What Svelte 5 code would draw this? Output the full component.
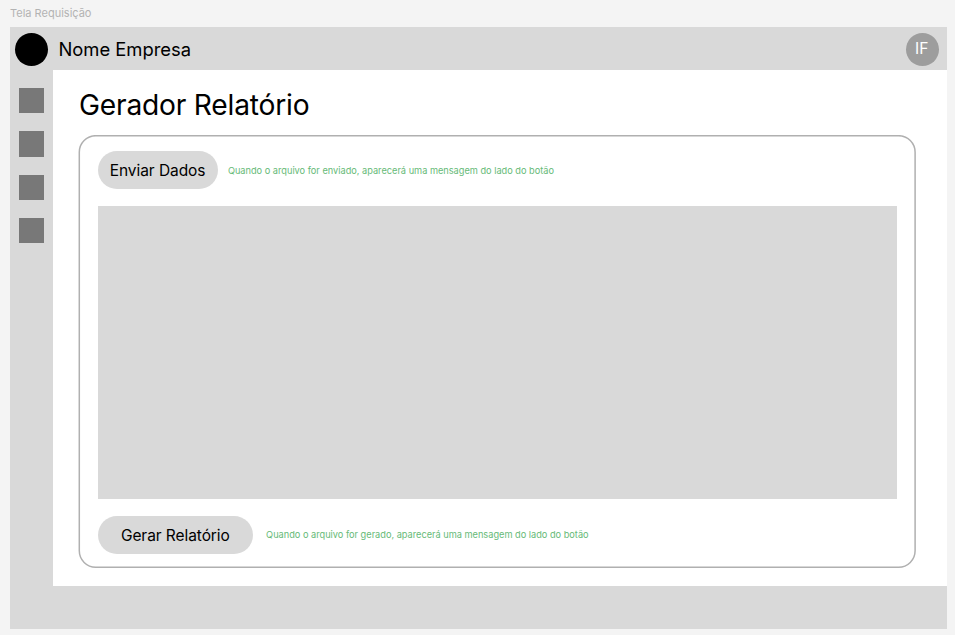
<script>
  const items = [1, 2, 3, 4];
</script>

<div class="canvas">
  <div class="label">Tela Requisição</div>
  <div class="frame">
    <header>
      <div class="logo"></div>
      <span class="company">Nome Empresa</span>
      <div class="avatar"><span>IF</span></div>
    </header>
    <div class="body">
      <nav>
        {#each items as item (item)}
          <div class="item"></div>
        {/each}
      </nav>
      <main>
        <h1>Gerador Relatório</h1>
        <section>
          <svg class="outline" width="838" height="434" aria-hidden="true">
            <rect x="1.3" y="0.7" width="835.8" height="431.6" rx="16.5" />
          </svg>
          <div class="row">
            <button class="send">Enviar Dados</button>
            <span class="message">Quando o arquivo for enviado, aparecerá uma mensagem do lado do botão</span>
          </div>
          <div class="preview"></div>
          <div class="row second">
            <button class="generate">Gerar Relatório</button>
            <span class="message">Quando o arquivo for gerado, aparecerá uma mensagem do lado do botão</span>
          </div>
        </section>
      </main>
    </div>
    <footer></footer>
  </div>
</div>

<style>
  :global(body) {
    background: #f4f4f4;
  }
  .canvas {
    box-sizing: border-box;
    width: 955px;
    height: 635px;
    padding: 0 7.7px 6px 10px;
    display: flex;
    flex-direction: column;
    overflow: hidden;
    font-family: Inter, 'Liberation Sans', sans-serif;
    color: #000;
  }
  .label {
    height: 27px;
    line-height: 27px;
    font-size: 11px;
    color: #b3b3b3;
    white-space: nowrap;
  }
  .frame {
    flex: 1;
    display: flex;
    flex-direction: column;
    background: #fff;
  }
  header {
    box-sizing: border-box;
    height: 43px;
    display: flex;
    align-items: center;
    padding: 1.4px 8.3px 0 5px;
    background: #d9d9d9;
  }
  .logo,
  .avatar {
    box-sizing: border-box;
    width: 33.4px;
    height: 33.4px;
    border-radius: 50%;
    background: #000;
  }
  .company {
    margin-left: 10px;
    font-size: 18.4px;
    line-height: 24px;
    white-space: nowrap;
  }
  .avatar {
    margin-left: auto;
    display: flex;
    align-items: center;
    justify-content: center;
    padding: 0 1px 1px 0;
    background: #9d9d9d;
    color: #fff;
    font-size: 15.6px;
    line-height: 20px;
  }
  .body {
    flex: 1;
    display: flex;
  }
  nav {
    box-sizing: border-box;
    width: 43px;
    padding: 18px 0 0 9px;
    display: flex;
    flex-direction: column;
    gap: 18px;
    background: #d9d9d9;
  }
  .item {
    width: 25px;
    height: 25.3px;
    background: #787878;
  }
  main {
    flex: 1;
    padding: 18px 31.3px 0 26px;
  }
  h1 {
    margin: 0;
    height: 47px;
    line-height: 34px;
    font-size: 28.2px;
    font-weight: 400;
    letter-spacing: -0.22px;
    white-space: nowrap;
  }
  section {
    position: relative;
    box-sizing: border-box;
    height: 433px;
    padding: 16px 19px 0 18.6px;
  }
  .outline {
    position: absolute;
    top: 0;
    left: -1px;
    pointer-events: none;
  }
  .outline rect {
    fill: none;
    stroke: #b0b0b0;
    stroke-width: 1.5;
  }
  .row {
    display: flex;
    align-items: center;
    height: 38.4px;
    gap: 10.3px;
  }
  .row.second {
    gap: 13px;
  }
  button {
    height: 38.4px;
    padding: 1px 0 0;
    border: 0;
    border-radius: 20px;
    background: #d9d9d9;
    color: #000;
    font-family: inherit;
    font-size: 15.5px;
    letter-spacing: -0.07px;
    white-space: nowrap;
  }
  .send {
    width: 120px;
  }
  .generate {
    width: 155.5px;
  }
  .message {
    font-size: 9.21px;
    color: #66ba77;
    white-space: nowrap;
  }
  .preview {
    height: 293.7px;
    margin: 16.4px 0 16.3px;
    background: #d9d9d9;
  }
  footer {
    height: 43px;
    background: #d9d9d9;
  }
</style>
